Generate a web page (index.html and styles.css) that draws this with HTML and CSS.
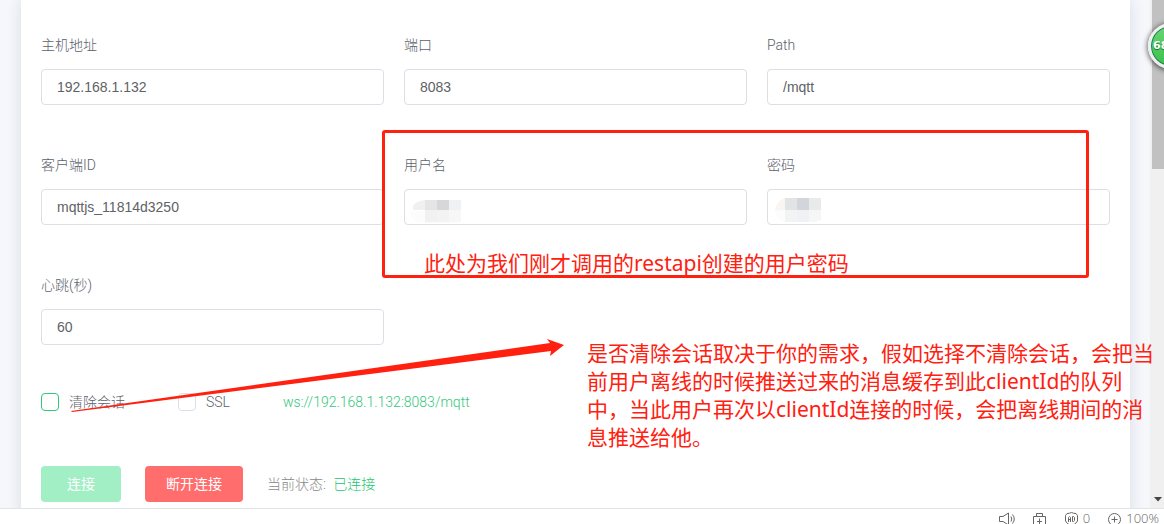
FILE: index.html
```html
<!DOCTYPE html>
<html lang="zh-CN">
<head>
<meta charset="utf-8">
<meta name="viewport" content="width=device-width, initial-scale=1">
<title>WebSocket</title>
<link rel="stylesheet" href="styles.css">
</head>
<body>
<div class="viewport">
  <main class="page">
    <form class="card">
      <div class="fields">
        <div class="field"><label for="host">主机地址</label><input id="host" type="text" value="192.168.1.132"></div>
        <div class="field"><label for="port">端口</label><input id="port" type="text" value="8083"></div>
        <div class="field"><label for="path">Path</label><input id="path" type="text" value="/mqtt"></div>
        <div class="field"><label for="client">客户端ID</label><input id="client" type="text" value="mqttjs_11814d3250"></div>
        <div class="field">
          <label for="user">用户名</label><input id="user" type="text">
          <svg class="mosaic" width="60" height="30" viewBox="0 0 60 30" aria-hidden="true">
            <path d="M2 18H51V30H14Q2 28 2 18Z" fill="#fcfcfc"/>
            <path d="M5 17V13Q8 8 17 7V17Z" fill="#f0f0f0"/>
            <path d="M17 7h12v10H17z" fill="#e5e5e5"/><path d="M29 7h12v10H29z" fill="#d7d7d9"/><path d="M41 7h12v10H41z" fill="#f0f1f4"/>
            <path d="M17 17h12v12H17z" fill="#f1f1f1"/><path d="M29 17h12v12H29z" fill="#f3f3f4"/><path d="M41 17h12v12H41z" fill="#f7f7f8"/>
          </svg>
        </div>
        <div class="field">
          <label for="pass">密码</label><input id="pass" type="password">
          <svg class="mosaic" width="60" height="30" viewBox="0 0 60 30" aria-hidden="true">
            <path d="M4 17Q6 7 14 5V17Z" fill="#f8f5f2"/>
            <path d="M14 5h12v12H14z" fill="#e1e3e4"/><path d="M26 5h12v12H26z" fill="#d2d6da"/><path d="M38 5h12v12H38z" fill="#e9ebeb"/>
            <path d="M4 17h10v12Q6 27 4 17z" fill="#fcfcfc"/><path d="M14 17h12v12H14z" fill="#f3f3f4"/><path d="M26 17h12v12H26z" fill="#f0f1f5"/><path d="M38 17h12v10l-6 2h-6z" fill="#f6f6f7"/>
          </svg>
        </div>
        <div class="field"><label for="keepalive">心跳(秒)</label><input id="keepalive" type="text" value="60"></div>
      </div>
      <div class="options">
        <label class="check"><input class="focused" type="checkbox">清除会话</label>
        <label class="check"><input type="checkbox">SSL</label>
        <span class="url">ws://192.168.1.132:8083/mqtt</span>
      </div>
      <div class="actions">
        <button class="btn connect" type="button" disabled>连接</button>
        <button class="btn disconnect" type="button">断开连接</button>
        <p class="state">当前状态: <span>已连接</span></p>
      </div>
    </form>
  </main>
  <div class="scrollbar" aria-hidden="true">
    <div class="thumb"></div>
    <svg width="8" height="5" viewBox="0 0 8 5"><path d="M0 0H8L4 4.500Z" fill="#444"/></svg>
  </div>
</div>
<footer class="status">
  <svg width="18" height="16" viewBox="0 0 18 16"><path d="M1.500 5.500H5L10.500 2V14L5 10.500H1.500ZM13 5.500Q14.500 8 13 10.500M14.500 3.500Q18 8 14.500 12.500"/></svg>
  <svg width="14" height="16" viewBox="0 0 14 16"><path d="M.5 5.500H12.500V14.500H.5ZM3.500 5.500V2.500H9.500V5.500M6.500 7.500V13.500M4 10.500H9"/></svg>
  <span class="item"><svg width="15" height="16" viewBox="0 0 15 16"><path d="M3 2.500Q5.500 2.500 7.500 1.500Q9.500 2.500 12 2.500L13.500 4.500V10Q12 13.500 7.500 14.500Q3 13.500 1.500 10V4.500Z"/><path d="M4.500 11V6.500L5.500 5.500L6.500 6.500V11M4.500 8.500H6.500M8.500 5.500V10.500H9.500L10.500 9.500V6.500L9.500 5.500Z"/></svg>0</span>
  <span class="item"><svg width="15" height="16" viewBox="0 0 15 16"><circle cx="7.500" cy="8.500" r="6"/><path d="M7.500 5.500V11.500M4.500 8.500H10.500"/></svg>100%</span>
</footer>
<div class="badge">68</div>
<div class="frame"></div>
<p class="note note-user">此处为我们刚才调用的restapi创建的用户密码</p>
<p class="note note-session">是否清除会话取决于你的需求，假如选择不清除会话，会把当前用户离线的时候推送过来的消息缓存到此clientId的队列中，当此用户再次以clientId连接的时候，会把离线期间的消息推送给他。</p>
<svg class="arrow" width="500" height="80" viewBox="0 0 500 80" aria-hidden="true"><path d="M1 75L480 7L477 3L494 9L480 20L481 15L2 76Z" fill="#ff2010"/></svg>
</body>
</html>
```
FILE: styles.css
```css
* { box-sizing: border-box; }

body {
  display: flex;
  flex-direction: column;
  position: relative;
  height: 100vh;
  margin: 0;
  overflow: hidden;
  background: #fff;
  color: #5c616b;
  font: 300 14px/20px Roboto, "Noto Sans CJK SC", sans-serif;
}

p { margin: 0; }

.viewport {
  display: flex;
  flex: 1;
  min-height: 0;
  overflow: hidden;
}

.page {
  flex: 1;
  padding: 0 20px 0 21px;
  background: #f5f7fb;
}

.card {
  min-height: 100%;
  padding: 35px 20px 20px;
  background: #fff;
  box-shadow: 0 0 14px rgba(40, 50, 80, 0.13);
}

.fields {
  display: grid;
  grid-template-columns: repeat(3, 1fr);
  gap: 50px 20px;
}

.field {
  display: flex;
  flex-direction: column;
  gap: 14px;
  position: relative;
}

.field input {
  width: 100%;
  height: 36px;
  padding: 0 15px;
  border: 1px solid #dcdfe6;
  border-radius: 4px;
  background: #fff;
  color: #606266;
  font: 14px "Liberation Sans", Arial, sans-serif;
}

.mosaic {
  position: absolute;
  left: 4px;
  bottom: 2px;
}

.options {
  display: flex;
  align-items: center;
  margin-top: 47px;
}

.check {
  display: flex;
  align-items: center;
  gap: 10px;
  margin-right: 53px;
}

.check input {
  appearance: none;
  width: 18px;
  height: 18px;
  margin: 0;
  border: 1px solid #dcdfe6;
  border-radius: 4px;
  background: #fff;
}

.check .focused { border-color: #34c77b; }

.url { color: #34c77b; }

.actions {
  display: flex;
  align-items: center;
  gap: 24px;
  margin-top: 54px;
}

.btn {
  height: 36px;
  padding: 0 20px 2px;
  border: 0;
  border-radius: 4px;
  color: #fff;
  font: 400 14px "Noto Sans CJK SC", sans-serif;
}

.connect {
  min-width: 80px;
  background: #a2eec5;
}

.disconnect {
  min-width: 98px;
  background: #ff6d6d;
}

.state { color: #888; }

.state span {
  margin-left: 4px;
  color: #20c76c;
}

.scrollbar {
  display: flex;
  flex-direction: column;
  justify-content: space-between;
  align-items: center;
  width: 14px;
  padding: 0 0 6px 2px;
  background: #f0f0f0;
}

.thumb {
  width: 100%;
  height: 169px;
  background: #c1c1c1;
}

.status {
  display: flex;
  justify-content: flex-end;
  align-items: flex-start;
  gap: 17px;
  height: 16px;
  padding: 2px 5px 0 0;
  overflow: hidden;
  border-top: 1px solid #e3e4e6;
  color: #666;
  font: 300 13px/15px "Open Sans", sans-serif;
}

.status svg {
  fill: none;
  stroke: #666;
}

.item {
  display: flex;
  gap: 4px;
}

.badge {
  position: absolute;
  top: 23px;
  right: -30px;
  width: 46px;
  height: 46px;
  padding-left: 2px;
  border: 3px solid #eee;
  border-radius: 50%;
  background: linear-gradient(#69d575, #3cc04c);
  box-shadow: inset 0 0 0 1px #188052, 0 1px 5px 1px rgba(0, 0, 0, 0.55);
  color: #fff;
  font: bold 11px/40px "DejaVu Sans", sans-serif;
  text-shadow: 0 1px 1px #176b2b;
}

.frame {
  position: absolute;
  top: 130px;
  left: 382px;
  width: 707px;
  height: 148px;
  border: 3px solid #ff2010;
  border-radius: 3px;
}

.note {
  position: absolute;
  color: #ff2010;
  font: 400 21px/28px "Noto Sans", "Noto Sans CJK SC", sans-serif;
}

.note-user {
  top: 249px;
  left: 424px;
  white-space: nowrap;
}

.note-session {
  top: 339px;
  left: 587px;
  width: 572px;
}

.arrow {
  position: absolute;
  top: 336px;
  left: 70px;
}
```
